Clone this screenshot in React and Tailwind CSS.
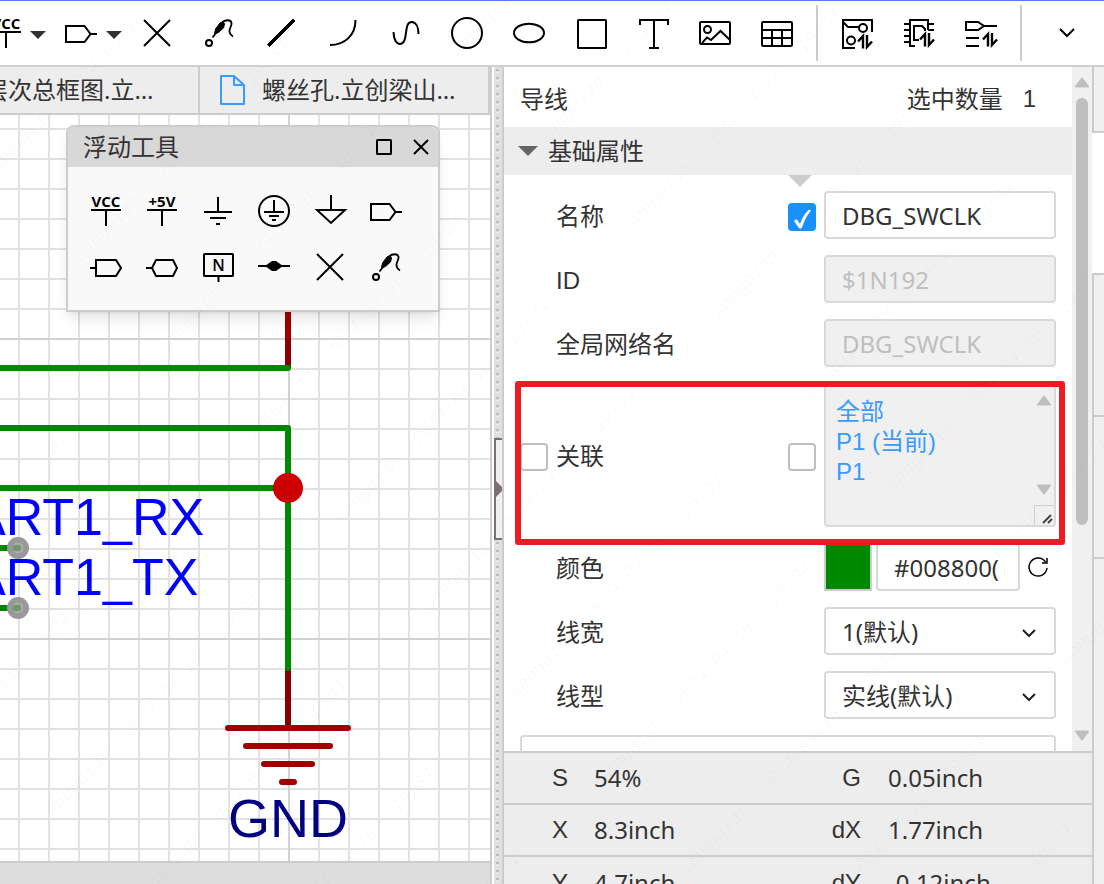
import React, { useState } from 'react';

const VccIcon = ({ label = 'VCC' }) => (
  <>
    <text x="16" y="12" textAnchor="middle" fontSize="15" fontWeight="700" fill="black" stroke="none" fontFamily="Open Sans, sans-serif">{label}</text>
    <path d="M1 15H31M16 15V31" />
  </>
);

const PortIcon = () => <path d="M1 9H19.5L25.5 17L19.5 25H1ZM25.5 17H32" />;

const CrossIcon = () => <path d="M3 3L29 29M29 3L3 29" />;

const ProbeIcon = () => (
  <>
    <circle cx="6" cy="26" r="3" />
    <path d="M9.5 20.5L13 16M19.5 5C22 3 28 2 28.5 6C29 9 26 11 26.5 15C27 17 28 18.5 30 19.5" strokeWidth="1.8" />
    <path d="M11.5 17L12.500 12L17 6L20 4.500L21.500 7L20.500 11L15.500 15.500Z" fill="black" strokeWidth="1" />
  </>
);

const UpDown = () => <path d="M17 24.5L22 19V31.5M26 18V30L31 24.500" strokeWidth="2.4" />;

const drawIcons = [
  { name: '非连接标识', art: <CrossIcon /> },
  { name: '探针', art: <ProbeIcon /> },
  { name: '直线', art: <path d="M3 29L29 3" strokeWidth="3" shapeRendering="crispEdges" /> },
  { name: '圆弧', art: <path d="M3 28C18 28 28.5 18 28.5 3" /> },
  { name: '贝塞尔曲线', art: <path d="M4.5 15C5 22 7 27 11 27C20 27 14 5 22.5 5C27 5 29.5 10 29.5 17" /> },
  { name: '圆形', art: <circle cx="16" cy="16" r="15" /> },
  { name: '椭圆', art: <ellipse cx="16" cy="16" rx="15" ry="9.3" /> },
  { name: '矩形', art: <rect x="3" y="3" width="28" height="28" rx="0.5" /> },
  { name: '文本', art: <path d="M3 8V3H31V8M17 3V31M12 31H22" /> },
  {
    name: '图片',
    art: (
      <>
        <rect x="1" y="5" width="30" height="22" rx="1" />
        <circle cx="8.5" cy="12.5" r="3.5" />
        <path d="M3 26L8 20.5L12 23L21.5 14L31 23" />
      </>
    ),
  },
  {
    name: '表格',
    art: (
      <>
        <rect x="1" y="5" width="30" height="24" rx="1" />
        <path d="M1 13H31M1 21H31M11 13V29M21 13V29" />
      </>
    ),
  },
];

const linkIcons = [
  {
    name: '更新PCB',
    art: (
      <>
        <path d="M31 15V3H2V31H14M2 5L7 10H18" />
        <circle cx="22" cy="11" r="4" />
        <circle cx="10" cy="23.5" r="4" />
        <UpDown />
      </>
    ),
  },
  {
    name: '更新器件',
    art: (
      <>
        <path d="M25 13V3H7V29H12M1 7H7M1 13H7M1 19H7M1 25H7M25 7H31M25 13H31M16 23H11V9H19L22 12V14" />
        <g transform="translate(0 -2)"><UpDown /></g>
      </>
    ),
  },
  {
    name: '更新网络',
    art: (
      <>
        <path d="M1 5H13L19 9L13 13H1ZM19 9H32M1 21H14M1 29H14" />
        <g transform="translate(1 -2)"><UpDown /></g>
      </>
    ),
  },
];

const floatIcons = [
  { name: 'VCC', art: <VccIcon /> },
  { name: '+5V', art: <VccIcon label="+5V" /> },
  { name: '电源地', art: <path d="M16 2V17M2 17H30M8 23H24M14 29H18" /> },
  {
    name: '保护地',
    art: (
      <>
        <circle cx="16" cy="16" r="15" />
        <path d="M16 5V17M6 17H26M11 21H21M14 25H18" />
      </>
    ),
  },
  { name: '模拟地', art: <path d="M17 0V15M3 15H31L17 28Z" /> },
  { name: '输出端口', art: <PortIcon /> },
  { name: '输入端口', art: <path d="M0 17H6M6 9H26L31 17L26 25H6Z" /> },
  { name: '双向端口', art: <path d="M0 17H6L10 9H27L31 17L27 25H10L6 17" /> },
  {
    name: '网络标签',
    art: (
      <>
        <rect x="2" y="3" width="29" height="22" rx="0.5" />
        <path d="M16.5 25V31" />
        <text x="16.5" y="20" textAnchor="middle" fontSize="16" fontWeight="600" fill="black" stroke="none" fontFamily="Open Sans, sans-serif">N</text>
      </>
    ),
  },
  {
    name: '短接符',
    art: (
      <>
        <path d="M0 15H32" />
        <path d="M7 15L14 10H18L25 15L18 20H14Z" fill="black" stroke="none" />
      </>
    ),
  },
  { name: '非连接', art: <CrossIcon /> },
  { name: '探针', art: <ProbeIcon /> },
];

const Icon = ({ children }) => (
  <svg width="32" height="32" viewBox="0 0 32 32" fill="none" stroke="black" strokeWidth="2" className="shrink-0 overflow-visible">
    {children}
  </svg>
);

const Triangle = ({ className = '', up = false, fill = '#bfbfbf' }) => (
  <svg width="14" height="11" viewBox="0 0 14 11" fill={fill} stroke={fill} strokeWidth="2" strokeLinejoin="round" className={className}>
    <path d={up ? 'M7 1.5L13 9.5H1Z' : 'M7 9.5L1 1.5H13Z'} />
  </svg>
);

const Chevron = ({ className = '' }) => (
  <svg width="16" height="10" viewBox="0 0 16 10" fill="none" stroke="black" strokeWidth="2" className={className}>
    <path d="M1 1L8 8L15 1" />
  </svg>
);

const Toolbar = () => (
  <header className="flex h-[67px] shrink-0 items-center overflow-hidden border-t border-b-2 border-t-[#4d7ef7] border-b-[#cfcfcf] bg-white">
    <button aria-label="VCC" className="flex w-[22px] justify-end overflow-hidden">
      <Icon><VccIcon /></Icon>
    </button>
    <button aria-label="更多电源标识" className="flex w-8 justify-center pt-1">
      <svg width="16" height="8" viewBox="0 0 16 8" fill="#333"><path d="M0 0H16L8 8Z" /></svg>
    </button>
    <button aria-label="网络端口" className="ml-[11px] flex w-8 justify-center">
      <Icon><PortIcon /></Icon>
    </button>
    <button aria-label="更多端口" className="flex w-[29px] items-center justify-end pt-1 pr-1">
      <svg width="16" height="8" viewBox="0 0 16 8" fill="#333"><path d="M0 0H16L8 8Z" /></svg>
    </button>
    {drawIcons.map((icon) => (
      <button key={icon.name} aria-label={icon.name} className="flex h-14 w-[62px] items-center justify-center">
        <Icon>{icon.art}</Icon>
      </button>
    ))}
    <div className="mr-2 ml-2 h-14 w-0.5 bg-[#ccc]" />
    {linkIcons.map((icon) => (
      <button key={icon.name} aria-label={icon.name} className="flex h-14 w-[62px] items-center justify-center">
        <Icon>{icon.art}</Icon>
      </button>
    ))}
    <div className="ml-2 h-14 w-0.5 bg-[#ccc]" />
    <button aria-label="展开" className="flex h-14 min-w-0 flex-1 items-center justify-center pl-2">
      <Chevron />
    </button>
  </header>
);

const Tabs = () => (
  <nav className="flex h-12 shrink-0 overflow-hidden border-b-2 border-[#ccc] bg-[#ededed] leading-[46px]">
    <button className="flex w-[200px] shrink-0 overflow-hidden border-r-2 border-[#ccc] whitespace-nowrap">
      <span className="-ml-4">层次总框图.立…</span>
    </button>
    <button className="flex flex-1 items-center gap-4 border-r-2 border-[#ccc] pl-5 whitespace-nowrap">
      <svg width="26" height="30" viewBox="0 0 26 30" fill="none" stroke="#3a9bff" strokeWidth="2" strokeLinejoin="round">
        <path d="M1 1H14L24 10V29H1ZM14 1V10H24" />
      </svg>
      <span>螺丝孔.立创梁山…</span>
    </button>
  </nav>
);

const Schematic = () => (
  <svg className="absolute inset-0 h-full w-full">
    <defs>
      <pattern id="grid" width="30" height="30" x="18" y="13" patternUnits="userSpaceOnUse">
        <path d="M0 1H30M1 0V30" stroke="#e2e2e2" strokeWidth="2" />
      </pattern>
      <pattern id="grid-major" width="300" height="300" x="288" y="223" patternUnits="userSpaceOnUse">
        <path d="M0 1H300M1 0V300" stroke="#d2d2d2" strokeWidth="2" />
      </pattern>
    </defs>
    <rect width="100%" height="100%" fill="url(#grid)" />
    <rect width="100%" height="100%" fill="url(#grid-major)" />
    <g transform="translate(0 -115)" fill="none" strokeWidth="6" strokeLinecap="round" strokeLinejoin="round">
      <path d="M288 300V340" stroke="#a00000" strokeLinecap="butt" />
      <path d="M288 340V368M288 668V726" stroke="#880000" strokeLinecap="butt" />
      <path d="M-5 368H288M-5 428H288V668M-5 488H288M-5 548H18M-5 608H18" stroke="#008800" />
      <path d="M228 728H348M246 746H330M264 764H312M282 782H294" stroke="#a00000" />
      <circle cx="288" cy="488" r="15" fill="#cc0000" />
      {[548, 608].map((y) => (
        <g key={y}>
          <circle cx="18" cy={y} r="8" stroke="#999" />
          <circle cx="18" cy={y} r="5" fill="#a6a6a6" />
          <path d={`M16 ${y}H18`} stroke="#6a996a" />
        </g>
      ))}
      <g stroke="none" fontFamily="Liberation Sans, Arial, sans-serif">
        <text x="-29" y="535" fontSize="52" fill="#0000ff">ART1_RX</text>
        <text x="-29" y="595" fontSize="52" fill="#0000ff">ART1_TX</text>
        <text x="288" y="837" fontSize="54" textAnchor="middle" fill="#000080">GND</text>
      </g>
    </g>
  </svg>
);

const FloatingTools = () => (
  <section className="absolute top-[10px] left-[66px] w-[374px] rounded-t-lg border-2 border-[#ccc] bg-[#f9f9f9] shadow-lg">
    <div className="flex h-10 items-center rounded-t-md bg-[#d8d8d8] pr-[9px] pl-[15px]">
      <h2 className="flex-1">浮动工具</h2>
      <button aria-label="最大化" className="mr-[21px]">
        <svg width="16" height="16" viewBox="0 0 16 16" fill="none" stroke="black" strokeWidth="2">
          <rect x="1" y="1" width="14" height="14" rx="0.5" />
        </svg>
      </button>
      <button aria-label="关闭">
        <svg width="16" height="16" viewBox="0 0 16 16" fill="none" stroke="black" strokeWidth="2">
          <path d="M1 1L15 15M15 1L1 15" />
        </svg>
      </button>
    </div>
    <div className="grid grid-cols-[repeat(6,56px)] pt-4 pb-[15px] pl-[10px]">
      {floatIcons.map((icon) => (
        <button key={icon.name} aria-label={icon.name} className="flex h-14 items-center justify-center">
          <Icon>{icon.art}</Icon>
        </button>
      ))}
    </div>
  </section>
);

const Splitter = () => (
  <div className="flex w-[10px] shrink-0 flex-col border-r-2 border-[#ccc] bg-[#e0e0e0]">
    <svg className="h-[371px] w-2 shrink-0">
      <defs>
        <pattern id="dots" width="8" height="8" patternUnits="userSpaceOnUse">
          <rect x="2" y="2" width="3" height="2" fill="#bdbdbd" />
          <rect x="2" y="5" width="3" height="1" fill="#f0f0f0" />
        </pattern>
      </defs>
      <rect width="8" height="100%" fill="url(#dots)" />
    </svg>
    <button aria-label="收起面板" className="flex h-[102px] w-2 shrink-0 items-center border-2 border-r-0 border-[#7d7070] bg-[#f0f0f0]">
      <svg width="6" height="16" viewBox="0 0 6 16" fill="#7d7070"><path d="M0 0L6 6V10L0 16Z" /></svg>
    </button>
    <svg className="min-h-0 w-2 flex-1"><rect width="8" height="100%" fill="url(#dots)" /></svg>
  </div>
);

const CheckBox = ({ id, label, checked, onChange }) => (
  <span className="relative flex h-7 w-7 shrink-0">
    <input
      id={id}
      type="checkbox"
      aria-label={label}
      checked={checked}
      onChange={onChange}
      className="h-7 w-7 appearance-none rounded border-2 border-[#bfbfbf] bg-white checked:border-[#1890ff] checked:bg-[#1890ff]"
    />
    {checked && (
      <svg width="18" height="20" viewBox="0 0 18 20" fill="white" className="pointer-events-none absolute top-[6px] left-[5px]">
        <path d="M1 12C3 10 4 10 5 12L7 15C9 9 12 4 16 0.5L18 1.5C14 6 11 12 9 18.5C8 20 6.500 20 5.500 18.500Z" />
      </svg>
    )}
  </span>
);

// label on the left, optional tick boxes, control on the right
const Row = ({ id, label, lead, tick, children }) => (
  <div className="flex items-center gap-2 px-4 py-2">
    <span className="w-7 shrink-0 pt-1">{lead}</span>
    <label htmlFor={id} className="flex-1 pt-1 font-['Liberation_Sans','Noto_Sans_CJK_SC',sans-serif]">{label}</label>
    <span className="w-7 shrink-0 pt-1">{tick}</span>
    <div className="w-[232px] shrink-0">{children}</div>
  </div>
);

const inputClass = 'block h-12 w-full rounded border-2 border-[#d9d9d9] bg-white px-4 disabled:bg-[#f0f0f0] disabled:text-[#bfbfbf]';

const Select = ({ id, options }) => (
  <div className="relative">
    <select id={id} className="block h-12 w-full appearance-none rounded border-2 border-[#d9d9d9] bg-white px-4 pt-0.5">
      {options.map((o) => <option key={o}>{o}</option>)}
    </select>
    <svg width="14" height="9" viewBox="0 0 14 9" fill="none" stroke="#222" strokeWidth="2" className="pointer-events-none absolute top-[22px] right-5">
      <path d="M1 1L7 7L13 1" />
    </svg>
  </div>
);

const Properties = () => {
  const [name, setName] = useState('DBG_SWCLK');
  const [color, setColor] = useState('#008800(');
  const [ticks, setTicks] = useState({ name: true, link: false, linkAll: false });

  const toggle = (key) => setTicks({ ...ticks, [key]: !ticks[key] });

  return (
    <div className="min-w-0 flex-1 overflow-hidden bg-white">
      <div className="flex h-[60px] items-center pt-1 pr-9 pl-4">
        <h2 className="flex-1">导线</h2>
        <span>选中数量</span>
        <span className="ml-5 font-['Liberation_Sans',sans-serif]">1</span>
      </div>
      <button className="relative flex h-12 w-full items-center gap-[10px] bg-[#ededed] pl-[14px]">
        <svg width="20" height="10" viewBox="0 0 20 10" fill="#666"><path d="M0 0H20L10 10Z" /></svg>
        基础属性
        <svg width="24" height="12" viewBox="0 0 24 12" fill="#ccc" className="absolute top-full right-[260px]"><path d="M0 0H24L12 12Z" /></svg>
      </button>
      <div className="pt-2">
        <Row id="name" label="名称" tick={<CheckBox label="显示名称" checked={ticks.name} onChange={() => toggle('name')} />}>
          <input id="name" className={inputClass} value={name} onChange={(e) => setName(e.target.value)} />
        </Row>
        <Row id="net-id" label="ID">
          <input id="net-id" className={inputClass} value="$1N192" disabled readOnly />
        </Row>
        <Row id="global-net" label="全局网络名">
          <input id="global-net" className={inputClass} value="DBG_SWCLK" disabled readOnly />
        </Row>
        <div className="relative z-10">
          <Row
            id="link"
            label="关联"
            lead={<CheckBox id="link" checked={ticks.link} onChange={() => toggle('link')} />}
            tick={<CheckBox label="显示关联" checked={ticks.linkAll} onChange={() => toggle('linkAll')} />}
          >
            <div className="relative flex h-36 flex-col items-start rounded border-2 border-[#d9d9d9] bg-[#f0f0f0] pt-3 pl-[10px] font-['Liberation_Sans','Noto_Sans_CJK_SC',sans-serif] leading-[30px] text-[#3a9bff]">
              <a href="#all">全部</a>
              <a href="#current">P1 (当前)</a>
              <a href="#p1">P1</a>
              <Triangle up className="absolute top-[10px] right-[3px]" />
              <Triangle className="absolute right-[3px] bottom-[30px]" />
              <svg width="20" height="20" viewBox="0 0 20 20" fill="none" className="absolute right-0 bottom-0">
                <path d="M0.5 20V0.5H20" stroke="#d0d0d0" />
                <path d="M9 18L17 10M14 18L18 14" stroke="#444" strokeWidth="2" />
              </svg>
            </div>
          </Row>
          <div className="pointer-events-none absolute top-[6px] right-[7px] -bottom-[10px] left-[11px] rounded-[3px] border-[6px] border-[#ed1c24]" />
        </div>
        <Row id="color" label="颜色">
          <div className="flex items-center">
            <button aria-label="选择颜色" className="h-12 w-12 shrink-0 border-2 border-[#ccc] bg-[#008800]" />
            <input id="color" className="ml-1 h-12 w-36 rounded border-2 border-[#d9d9d9] bg-white pl-4" value={color} onChange={(e) => setColor(e.target.value)} />
            <button aria-label="重置颜色" className="ml-2">
              <svg width="20" height="20" viewBox="0 0 20 20" fill="none" stroke="black" strokeWidth="1.5">
                <path d="M19 11A9 9 0 1 1 17.500 5M19 1V6H14" />
              </svg>
            </button>
          </div>
        </Row>
        <Row id="line-width" label="线宽"><Select id="line-width" options={['1(默认)', '2', '3']} /></Row>
        <Row id="line-style" label="线型"><Select id="line-style" options={['实线(默认)', '虚线', '点线']} /></Row>
        <div className="px-4 py-2">
          <button aria-label="更多属性" className="block h-12 w-full rounded border-2 border-[#d9d9d9] bg-white" />
        </div>
      </div>
    </div>
  );
};

const status = [
  ['S', '54%', 'G', '0.05inch'],
  ['X', '8.3inch', 'dX', '1.77inch'],
  ['Y', '4.7inch', 'dY', '-0.12inch'],
];

const StatusTable = () => (
  <div className="h-[133px] shrink-0 overflow-hidden bg-[#ededed]">
    <table className="w-full table-fixed border-collapse">
      <tbody>
        {status.map(([a, b, c, d]) => (
          <tr key={a} className="h-[52px] border-t-2 border-[#ccc]">
            <th className="w-16 p-0 text-right font-['Liberation_Sans',sans-serif] font-normal">{a}</th>
            <td className="w-[206px] p-0 pl-[26px]">{b}</td>
            <th className="w-[87px] p-0 text-right font-['Liberation_Sans',sans-serif] font-normal">{c}</th>
            <td className="p-0 pl-[27px]">{d}</td>
          </tr>
        ))}
      </tbody>
    </table>
  </div>
);

const SideStrip = () => (
  <div className="flex w-3 shrink-0 flex-col">
    <div className="h-[66px] border-b-2 border-l-2 border-[#ccc] bg-[#f0f0f0]" />
    <div className="h-[140px] bg-white" />
    <div className="h-[142px] border-t-2 border-l-2 border-[#ccc] bg-[#f0f0f0]" />
    <div className="h-[142px] border-t-2 border-l-2 border-[#ccc] bg-[#f0f0f0]" />
    <div className="flex-1 border-t-2 border-l-2 border-[#ccc] bg-[#f0f0f0]" />
  </div>
);

const marks = [
  { text: 'wangqiao', x: 107, y: 228 },
  { text: '2024-04-16', x: 278, y: 228 },
  { text: '19:34', x: 441, y: 236 },
];

const Watermark = () => (
  <svg aria-hidden="true" className="pointer-events-none absolute inset-0 z-20 h-full w-full" fontFamily="Liberation Mono, monospace" fontSize="18" fontStyle="italic" textAnchor="middle" fill="black" fillOpacity="0.03">
    {[-1, 0, 1].map((band) =>
      [-8, -7, -6, -5, -4, -3, -2, -1, 0, 1, 2, 3, 4, 5, 6, 7].map((step) =>
        marks.map((m) => {
          const x = m.x + band * 551 + step * 87;
          const y = m.y - band * 32 + step * 87;
          if (x < -50 || y < -50 || x > 1150 || y > 930) return null;
          return <text key={`${m.text}${band}${step}`} transform={`translate(${x} ${y}) rotate(-46)`} y="6">{m.text}</text>;
        })
      )
    )}
  </svg>
);

const App = () => {
  return (
    <div className="relative flex h-screen flex-col overflow-hidden bg-white font-['Noto_Sans','Noto_Sans_CJK_SC',sans-serif] text-2xl leading-8 text-[#333]">
      <Toolbar />
      <div className="flex min-h-0 flex-1">
        <div className="mr-0.5 flex min-w-0 flex-1 flex-col border-r-2 border-[#ccc]">
          <Tabs />
          <main className="relative min-h-0 flex-1 overflow-hidden bg-white">
            <Schematic />
            <FloatingTools />
          </main>
          <div className="h-[23px] shrink-0 border-t-2 border-[#ccc] bg-[#ddd]" />
        </div>
        <Splitter />
        <aside className="flex w-[588px] shrink-0 flex-col">
          <div className="flex min-h-0 flex-1">
            <Properties />
            <div className="flex w-5 shrink-0 flex-col items-center bg-[#f0f0f0] pt-[10px] pb-[10px]">
              <Triangle up />
              <div className="mt-[10px] h-[427px] w-3 rounded-full bg-[#bfbfbf]" />
              <Triangle className="mt-auto" />
            </div>
          </div>
          <StatusTable />
        </aside>
        <SideStrip />
      </div>
      <Watermark />
    </div>
  );
};

export default App;
